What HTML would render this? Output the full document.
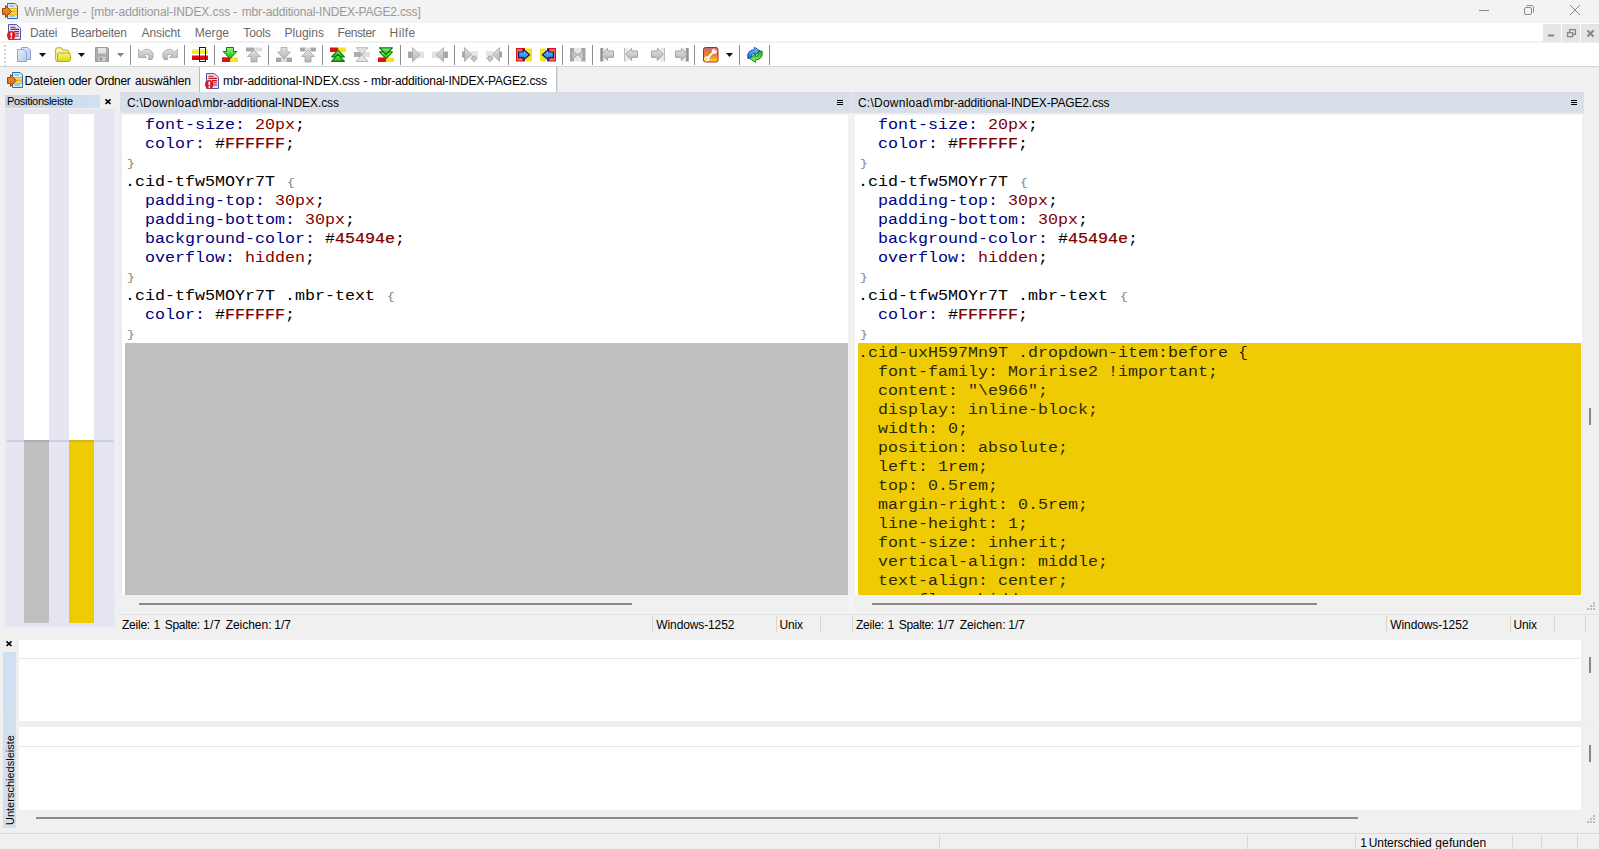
<!DOCTYPE html>
<html><head><meta charset="utf-8"><title>WinMerge</title><style>
*{box-sizing:border-box;margin:0;padding:0}
html,body{width:1599px;height:849px;overflow:hidden;background:#f0f0f0}
body{position:relative;font-family:"Liberation Sans",sans-serif;font-size:12px;color:#000}
.a{position:absolute}
.t{position:absolute;white-space:pre;line-height:14px;height:14px}
.code{position:absolute;white-space:pre;font-family:"Liberation Mono",monospace;font-size:14px;line-height:19px;height:19px;color:#000;transform:scaleX(1.1905);transform-origin:0 0}
.k{color:#000080}.v{color:#800000}.h{color:#800000;-webkit-text-stroke:0.25px #800000}.y{color:rgba(0,0,0,.84)}.b{color:#85857c;font-size:11.5px;margin-left:1.5px}
.sep{position:absolute;width:1px;background:#8d8d8d;top:45px;height:20px}
.ss{position:absolute;width:1px;background:#d7d7d7}
svg{position:absolute;overflow:visible}
</style></head><body>
<div class="a" style="left:0px;top:0px;width:1599px;height:23px;background:#f3f3f3;"></div>
<div class="a" style="left:0px;top:23px;width:1599px;height:20px;background:#fff;"></div>
<div class="a" style="left:0px;top:41px;width:1599px;height:2px;background:#f1f1f1;"></div>
<div class="a" style="left:0px;top:43px;width:1599px;height:23px;background:#fff;"></div>
<div class="a" style="left:0px;top:66px;width:1599px;height:1px;background:#d4d4d4;"></div>
<div class="a" style="left:0px;top:67px;width:1599px;height:25px;background:#f0f0f0;"></div>
<div class="a" style="left:199px;top:67px;width:1px;height:25px;background:#b9b9b9;"></div>
<div class="a" style="left:200px;top:67px;width:356px;height:25px;background:#fff;"></div>
<div class="a" style="left:556px;top:67px;width:1px;height:25px;background:#c4c4c4;"></div>
<div class="a" style="left:557px;top:67px;width:1px;height:25px;background:#dedede;"></div>
<div class="t" style="left:24.25px;top:5px;font-size:12px;color:#999999;letter-spacing:0.056px">WinMerge</div>
<div class="t" style="left:82.57px;top:5px;font-size:12px;color:#999999;letter-spacing:0px">-</div>
<div class="t" style="left:91.05px;top:5px;font-size:12px;color:#999999;letter-spacing:-0.089px">[mbr-additional-INDEX.css</div>
<div class="t" style="left:232.97px;top:5px;font-size:12px;color:#999999;letter-spacing:0px">-</div>
<div class="t" style="left:241.81px;top:5px;font-size:12px;color:#999999;letter-spacing:-0.185px">mbr-additional-INDEX-PAGE2.css]</div>
<svg style="left:1474px;top:0" width="120" height="23" viewBox="0 0 120 23"><g fill="none" stroke="#8b8b8b" stroke-width="1"><path d="M5 10.5H15"/><rect x="50.5" y="7.5" width="7" height="7" rx="1.5"/><path d="M52.5 5.5H57.5A2 2 0 0 1 59.5 7.5V12.5"/><path d="M96 5L106 15M106 5L96 15"/></g></svg>
<div class="a" style="left:1543px;top:24px;width:18px;height:18px;background:#e5e5e5;"></div>
<div class="a" style="left:1562px;top:24px;width:18px;height:18px;background:#e5e5e5;"></div>
<div class="a" style="left:1581px;top:24px;width:18px;height:18px;background:#e5e5e5;"></div>
<svg style="left:1543px;top:24px" width="56" height="18" viewBox="0 0 56 18"><rect x="5" y="10.5" width="6" height="2" fill="#7f868f"/><g fill="none" stroke="#7f868f" stroke-width="1.3"><rect x="24.6" y="8.6" width="5" height="4"/><path d="M26.6 8V5.6H32.4V10.4H30"/></g><path d="M44.5 6.5L50.5 12.5M50.5 6.5L44.5 12.5" stroke="#7f868f" stroke-width="2" fill="none"/></svg>
<div class="t" style="left:30.12px;top:26px;font-size:12px;color:#6a6a6a;letter-spacing:-0.205px">Datei</div>
<div class="t" style="left:70.82px;top:26px;font-size:12px;color:#6a6a6a;letter-spacing:-0.21px">Bearbeiten</div>
<div class="t" style="left:141.58px;top:26px;font-size:12px;color:#6a6a6a;letter-spacing:-0.09px">Ansicht</div>
<div class="t" style="left:194.82px;top:26px;font-size:12px;color:#6a6a6a;letter-spacing:0.051px">Merge</div>
<div class="t" style="left:243.34px;top:26px;font-size:12px;color:#6a6a6a;letter-spacing:-0.153px">Tools</div>
<div class="t" style="left:284.62px;top:26px;font-size:12px;color:#6a6a6a;letter-spacing:-0.007px">Plugins</div>
<div class="t" style="left:337.52px;top:26px;font-size:12px;color:#6a6a6a;letter-spacing:-0.417px">Fenster</div>
<div class="t" style="left:389.62px;top:26px;font-size:12px;color:#6a6a6a;letter-spacing:0.403px">Hilfe</div>
<div class="sep" style="left:130px"></div>
<div class="sep" style="left:184px"></div>
<div class="sep" style="left:214px"></div>
<div class="sep" style="left:268px"></div>
<div class="sep" style="left:322px"></div>
<div class="sep" style="left:400px"></div>
<div class="sep" style="left:454px"></div>
<div class="sep" style="left:508px"></div>
<div class="sep" style="left:562px"></div>
<div class="sep" style="left:592px"></div>
<div class="sep" style="left:694px"></div>
<div class="sep" style="left:739px"></div>
<div class="sep" style="left:769px"></div>
<div class="a" style="left:4px;top:45px;width:1.5px;height:2px;background:#d2d2d2;"></div>
<div class="a" style="left:4px;top:49px;width:1.5px;height:2px;background:#d2d2d2;"></div>
<div class="a" style="left:4px;top:53px;width:1.5px;height:2px;background:#d2d2d2;"></div>
<div class="a" style="left:4px;top:57px;width:1.5px;height:2px;background:#d2d2d2;"></div>
<div class="a" style="left:4px;top:61px;width:1.5px;height:2px;background:#d2d2d2;"></div>
<div class="a" style="left:4px;top:65px;width:1.5px;height:2px;background:#d2d2d2;"></div>
<div class="t" style="left:24.62px;top:74px;font-size:12px;color:#000;letter-spacing:-0.135px">Dateien</div>
<div class="t" style="left:68.25px;top:74px;font-size:12px;color:#000;letter-spacing:-0.272px">oder</div>
<div class="t" style="left:95.04px;top:74px;font-size:12px;color:#000;letter-spacing:-0.318px">Ordner</div>
<div class="t" style="left:135.1px;top:74px;font-size:12px;color:#000;letter-spacing:-0.181px">auswählen</div>
<div class="t" style="left:222.96px;top:74px;font-size:12px;color:#000;letter-spacing:-0.051px">mbr-additional-INDEX.css</div>
<div class="t" style="left:363.57px;top:74px;font-size:12px;color:#000;letter-spacing:0px">-</div>
<div class="t" style="left:371.11px;top:74px;font-size:12px;color:#000;letter-spacing:-0.181px">mbr-additional-INDEX-PAGE2.css</div>
<svg width="0" height="0" style="left:0;top:0"><defs><linearGradient id="gG" x1="0" y1="0" x2="0" y2="1"><stop offset="0" stop-color="#a4f590"/><stop offset="0.5" stop-color="#4fd63c"/><stop offset="1" stop-color="#1fae14"/></linearGradient><linearGradient id="gS" x1="0" y1="0" x2="0" y2="1"><stop offset="0" stop-color="#e2e2e2"/><stop offset="1" stop-color="#b4b4b4"/></linearGradient><linearGradient id="gB" x1="0" y1="0" x2="0" y2="1"><stop offset="0" stop-color="#7fd0ff"/><stop offset="1" stop-color="#1560d8"/></linearGradient><linearGradient id="gW" x1="0" y1="0" x2="0" y2="1"><stop offset="0" stop-color="#cf6a6a"/><stop offset="0.55" stop-color="#f08030"/><stop offset="1" stop-color="#ffe020"/></linearGradient><linearGradient id="gY" x1="0" y1="0" x2="0" y2="1"><stop offset="0" stop-color="#f6f08a"/><stop offset="1" stop-color="#e4d800"/></linearGradient><linearGradient id="gP" x1="0" y1="0" x2="1" y2="1"><stop offset="0" stop-color="#e4eefc"/><stop offset="1" stop-color="#b4cbee"/></linearGradient><linearGradient id="gO" x1="0" y1="0" x2="0" y2="1"><stop offset="0" stop-color="#e8923a"/><stop offset="1" stop-color="#d86a10"/></linearGradient></defs></svg>
<svg style="left:16px;top:47px" width="16" height="16" viewBox="0 0 16 16"><path d="M5.5 0.5H12L14.5 3V12.5H5.5Z" fill="url(#gP)" stroke="#8ea6cf"/><path d="M1.5 2.5H8L10.5 5V14.5H1.5Z" fill="url(#gP)" stroke="#8ea6cf"/></svg>
<svg style="left:39px;top:53px" width="7" height="4" viewBox="0 0 7 4"><path d="M0 0H7L3.5 4Z" fill="#111"/></svg>
<svg style="left:55px;top:47px" width="16" height="16" viewBox="0 0 16 16"><path d="M0.6 3Q0.6 0.7 2.8 0.7H5.6Q6.8 0.7 7.4 2L8 3H12Q13.6 3 13.6 4.6V13Q13.6 14.5 12 14.5H2.6Q0.6 14.5 0.6 12.5Z" fill="#f6f2a4" stroke="#b9ad12"/><path d="M2.5 7.2Q2.5 6 3.9 6H14Q15.4 6 15.4 7.4V12.6Q15.4 14.5 13.4 14.5H4Q2.5 14.5 2.5 13Z" fill="url(#gY)" stroke="#b9ad12"/></svg>
<svg style="left:78px;top:53px" width="7" height="4" viewBox="0 0 7 4"><path d="M0 0H7L3.5 4Z" fill="#111"/></svg>
<svg style="left:95px;top:47px" width="16" height="16" viewBox="0 0 16 16"><path d="M0.5 0.5H12.5L13.5 1.5V14.5H0.5Z" fill="#ababab" stroke="#9a9a9a"/><rect x="3" y="1" width="8" height="5.5" fill="#e4e4e4"/><rect x="3.5" y="9.5" width="7" height="5" fill="#c9c9c9"/><rect x="5" y="10.5" width="2" height="3" fill="#8c8c8c"/></svg>
<svg style="left:117px;top:53px" width="7" height="4" viewBox="0 0 7 4"><path d="M0 0H7L3.5 4Z" fill="#858585"/></svg>
<svg style="left:138px;top:48px" width="16" height="16" viewBox="0 0 16 16"><path d="M0.5 1.4V9.6H8.7L5.9 7Q8 5.4 10 6.8Q11.8 8.4 10.2 11.5H14Q17 7 13.4 3Q8.5 -1 3.2 4Z" fill="url(#gS)" stroke="#a4a4a4" stroke-width="0.8"/></svg>
<svg style="left:162px;top:48px" width="16" height="16" viewBox="0 0 16 16"><g transform="translate(16,0) scale(-1,1)"><path d="M0.5 1.4V9.6H8.7L5.9 7Q8 5.4 10 6.8Q11.8 8.4 10.2 11.5H14Q17 7 13.4 3Q8.5 -1 3.2 4Z" fill="url(#gS)" stroke="#a4a4a4" stroke-width="0.8"/></g></svg>
<svg style="left:192px;top:47px" width="16" height="16" viewBox="0 0 16 16"><rect x="0" y="2.5" width="16" height="4.2" fill="#f4e41c"/><rect x="0" y="2.5" width="16" height="1.2" fill="#f7f08c"/><rect x="0" y="8.5" width="16" height="4.2" fill="#e01010"/><rect x="0" y="11.5" width="16" height="1.2" fill="#b00000"/><rect x="7.5" y="0.5" width="6" height="14" fill="none" stroke="#1c1c1c" stroke-width="1"/></svg>
<svg style="left:222px;top:47px" width="16" height="16" viewBox="0 0 16 16"><rect x="0" y="10.3" width="8" height="4.7" fill="#e01010"/><rect x="8" y="10.3" width="8" height="4.7" fill="#f4e41c"/><path d="M4.5 0.5H11.5V4.5H14.8L8 11.8L1.2 4.5H4.5Z" fill="url(#gG)" stroke="#0c7a08" stroke-width="1"/></svg>
<svg style="left:246px;top:47px" width="16" height="16" viewBox="0 0 16 16"><rect x="0" y="0.5" width="8" height="4" fill="#a8a8a8"/><rect x="8" y="0.5" width="8" height="4" fill="#dedede"/><path d="M5 15V9.5H1.5L8 3L14.5 9.5H11V15Z" fill="url(#gS)" stroke="#a3a3a3" stroke-width="0.8"/></svg>
<svg style="left:276px;top:47px" width="16" height="16" viewBox="0 0 16 16"><rect x="0" y="10.5" width="5.5" height="4.5" fill="#a8a8a8"/><rect x="5.5" y="10.5" width="5" height="4.5" fill="#dcdcdc"/><rect x="10.5" y="10.5" width="5.5" height="4.5" fill="#a8a8a8"/><path d="M5 0.5H11V5H14.5L8 12L1.5 5H5Z" fill="url(#gS)" stroke="#a3a3a3" stroke-width="0.8"/></svg>
<svg style="left:300px;top:47px" width="16" height="16" viewBox="0 0 16 16"><rect x="0" y="0.5" width="5.5" height="4" fill="#a8a8a8"/><rect x="5.5" y="0.5" width="5" height="4" fill="#dcdcdc"/><rect x="10.5" y="0.5" width="5.5" height="4" fill="#a8a8a8"/><path d="M5 15V9.5H1.5L8 3L14.5 9.5H11V15Z" fill="url(#gS)" stroke="#a3a3a3" stroke-width="0.8"/></svg>
<svg style="left:330px;top:47px" width="16" height="16" viewBox="0 0 16 16"><rect x="0" y="0.5" width="8" height="4.5" fill="#e01010"/><rect x="8" y="0.5" width="8" height="4.5" fill="#f4e41c"/><path d="M8 3.2L14.4 9.8H1.6Z" fill="url(#gG)" stroke="#0c7a08" stroke-width="1.2" stroke-linejoin="round"/><path d="M8 7.4L14.4 14.3H1.6Z" fill="url(#gG)" stroke="#0c7a08" stroke-width="1.2" stroke-linejoin="round"/></svg>
<svg style="left:354px;top:47px" width="16" height="16" viewBox="0 0 16 16"><rect x="0" y="5" width="8" height="5" fill="#acacac"/><rect x="8" y="5" width="8" height="5" fill="#dedede"/><path d="M2 0.7H14L8 7.5Z M2 14.5H14L8 7.5Z" fill="#e2e2e2" stroke="#b2b2b2" stroke-width="0.9"/></svg>
<svg style="left:378px;top:47px" width="16" height="16" viewBox="0 0 16 16"><rect x="0" y="10.5" width="8" height="4.5" fill="#e01010"/><rect x="8" y="10.5" width="8" height="4.5" fill="#f4e41c"/><path d="M1.6 4.8H14.4L8 11.6Z" fill="url(#gG)" stroke="#0c7a08" stroke-width="1.2" stroke-linejoin="round"/><path d="M1.6 0.8H14.4L8 7.5Z" fill="url(#gG)" stroke="#0c7a08" stroke-width="1.2" stroke-linejoin="round"/></svg>
<svg style="left:408px;top:47px" width="16" height="16" viewBox="0 0 16 16"><rect x="0" y="4.5" width="8" height="6.5" fill="#a8a8a8"/><rect x="8" y="4.5" width="8" height="6.5" fill="#e2e2e2"/><path d="M4.5 0.5L12 7.7L4.5 14.8Z" fill="url(#gS)" stroke="#a6a6a6" stroke-width="0.8"/></svg>
<svg style="left:432px;top:47px" width="16" height="16" viewBox="0 0 16 16"><g transform="translate(16,0) scale(-1,1)"><rect x="0" y="4.5" width="8" height="6.5" fill="#a8a8a8"/><rect x="8" y="4.5" width="8" height="6.5" fill="#e2e2e2"/><path d="M4.5 0.5L12 7.7L4.5 14.8Z" fill="url(#gS)" stroke="#a6a6a6" stroke-width="0.8"/></g></svg>
<svg style="left:462px;top:47px" width="16" height="16" viewBox="0 0 16 16"><rect x="0" y="4.5" width="3" height="6" fill="#a8a8a8"/><rect x="8" y="4" width="8" height="6" fill="#e6e6e6"/><path d="M2.5 0.5L9.5 7.5L2.5 14.5Z" fill="url(#gS)" stroke="#a6a6a6" stroke-width="0.8"/><path d="M10.5 9H13.5V11H15.5L12 14.8L8.5 11H10.5Z" fill="#c9c9c9" stroke="#a2a2a2" stroke-width="0.8"/></svg>
<svg style="left:486px;top:47px" width="16" height="16" viewBox="0 0 16 16"><g transform="translate(16,0) scale(-1,1)"><rect x="0" y="4.5" width="3" height="6" fill="#a8a8a8"/><rect x="8" y="4" width="8" height="6" fill="#e6e6e6"/><path d="M2.5 0.5L9.5 7.5L2.5 14.5Z" fill="url(#gS)" stroke="#a6a6a6" stroke-width="0.8"/><path d="M10.5 9H13.5V11H15.5L12 14.8L8.5 11H10.5Z" fill="#c9c9c9" stroke="#a2a2a2" stroke-width="0.8"/></g></svg>
<svg style="left:516px;top:47px" width="16" height="16" viewBox="0 0 16 16"><rect x="0.5" y="1.5" width="8" height="12.5" fill="#f06868" stroke="#e01010"/><rect x="10" y="1.5" width="6" height="13" fill="#f4e41c"/><path d="M2.6 5H7.2V2.2L13.6 7.8L7.2 13.4V10.6H2.6Z" fill="url(#gB)" stroke="#0a1e6e" stroke-width="1.2" stroke-linejoin="round"/></svg>
<svg style="left:540px;top:47px" width="16" height="16" viewBox="0 0 16 16"><g transform="translate(16,0) scale(-1,1)"><rect x="0.5" y="1.5" width="8" height="12.5" fill="#f06868" stroke="#e01010"/><rect x="10" y="1.5" width="6" height="13" fill="#f4e41c"/><path d="M2.6 5H7.2V2.2L13.6 7.8L7.2 13.4V10.6H2.6Z" fill="url(#gB)" stroke="#0a1e6e" stroke-width="1.2" stroke-linejoin="round"/></g></svg>
<svg style="left:570px;top:47px" width="16" height="16" viewBox="0 0 16 16"><rect x="0" y="1" width="4.2" height="13.5" fill="#a6a6a6"/><rect x="11.3" y="1" width="4.2" height="13.5" fill="#a6a6a6"/><rect x="5" y="1" width="5.5" height="13.5" fill="#e6e6e6"/><path d="M2 3L7.7 7.7L2 12.5Z M13.5 3L7.7 7.7L13.5 12.5Z" fill="#c4c4c4" stroke="#9e9e9e" stroke-width="0.8"/></svg>
<svg style="left:600px;top:47px" width="15" height="16" viewBox="0 0 15 16"><rect x="0.3" y="1" width="2.6" height="13.5" fill="#909090"/><rect x="3" y="1" width="2.5" height="13.5" fill="#e6e6e6"/><path d="M13.5 3.9H7.6V1.2L1.8 7.3L7.6 13.6V10.4H13.5Z" fill="url(#gS)" stroke="#9f9f9f" stroke-width="0.9"/></svg>
<svg style="left:624px;top:47px" width="15" height="16" viewBox="0 0 15 16"><rect x="0.3" y="1" width="1" height="13.5" fill="#a0a0a0"/><rect x="1.5" y="1" width="3" height="13.5" fill="#e8e8e8"/><path d="M13.5 3.9H7.6V1.2L1.8 7.3L7.6 13.6V10.4H13.5Z" fill="url(#gS)" stroke="#9f9f9f" stroke-width="0.9"/></svg>
<svg style="left:650px;top:47px" width="15" height="16" viewBox="0 0 15 16"><g transform="translate(15,0) scale(-1,1)"><rect x="0.3" y="1" width="1" height="13.5" fill="#a0a0a0"/><rect x="1.5" y="1" width="3" height="13.5" fill="#e8e8e8"/><path d="M13.5 3.9H7.6V1.2L1.8 7.3L7.6 13.6V10.4H13.5Z" fill="url(#gS)" stroke="#9f9f9f" stroke-width="0.9"/></g></svg>
<svg style="left:674px;top:47px" width="15" height="16" viewBox="0 0 15 16"><g transform="translate(15,0) scale(-1,1)"><rect x="0.3" y="1" width="2.6" height="13.5" fill="#909090"/><rect x="3" y="1" width="2.5" height="13.5" fill="#e6e6e6"/><path d="M13.5 3.9H7.6V1.2L1.8 7.3L7.6 13.6V10.4H13.5Z" fill="url(#gS)" stroke="#9f9f9f" stroke-width="0.9"/></g></svg>
<svg style="left:703px;top:47px" width="16" height="16" viewBox="0 0 16 16"><rect x="0.5" y="0.5" width="14.5" height="14.5" rx="2" fill="url(#gW)" stroke="#a52a2a"/><path d="M4 11.6L11 4.4" stroke="#fff" stroke-width="2" stroke-linecap="butt"/><circle cx="11.3" cy="4.2" r="2.5" fill="#fff"/><path d="M11.3 4.2L14.6 2.6L12.8 0.8Z" fill="#d5705c"/><circle cx="3.9" cy="11.7" r="2.5" fill="#fff"/><path d="M3.9 11.7L0.8 13.2L2.6 15Z" fill="#f8c838"/><circle cx="3.7" cy="11.9" r="0.8" fill="#f4a636"/></svg>
<svg style="left:726px;top:53px" width="7" height="4" viewBox="0 0 7 4"><path d="M0 0H7L3.5 4Z" fill="#111"/></svg>
<svg style="left:747px;top:47px" width="16" height="16" viewBox="0 0 16 16"><path d="M0.9 11.4Q-0.6 3.4 7.4 2.7V0.3L13.4 4.1L7.8 8.4V6.2Q3.9 6.3 4.9 11.4Z" fill="url(#gB)" stroke="#0b3fae" stroke-width="0.9" stroke-linejoin="round"/><g transform="rotate(180 8 7.8)"><path d="M0.9 11.4Q-0.6 3.4 7.4 2.7V0.3L13.4 4.1L7.8 8.4V6.2Q3.9 6.3 4.9 11.4Z" fill="url(#gG)" stroke="#0c7a08" stroke-width="0.9" stroke-linejoin="round"/></g></svg>
<svg style="left:2px;top:3px" width="16" height="16" viewBox="0 0 16 16"><path d="M5.5 0.5H13L15.5 3V15.5H5.5Z" fill="#d3ecfc" stroke="#2b6cb0"/><path d="M7.5 3H12M7.5 13H13" stroke="#5aa0d8" stroke-width="1"/><rect x="6" y="5" width="9" height="7" fill="#f3b90e"/><path d="M8 6.8H15M8 10.2H15" stroke="#fbe27a" stroke-width="1.2"/><path d="M0.5 5.5H3.5V2.5L9.3 8.5L3.5 14.5V11.5H0.5Z" fill="url(#gO)" stroke="#8a3c0a" stroke-width="0.9"/></svg>
<svg style="left:7px;top:72px" width="16" height="16" viewBox="0 0 16 16"><path d="M5.5 0.5H13L15.5 3V15.5H5.5Z" fill="#d3ecfc" stroke="#2b6cb0"/><path d="M7.5 3H12M7.5 13H13" stroke="#5aa0d8" stroke-width="1"/><rect x="6" y="5" width="9" height="7" fill="#f3b90e"/><path d="M8 6.8H15M8 10.2H15" stroke="#fbe27a" stroke-width="1.2"/><path d="M0.5 5.5H3.5V2.5L9.3 8.5L3.5 14.5V11.5H0.5Z" fill="url(#gO)" stroke="#8a3c0a" stroke-width="0.9"/></svg>
<svg style="left:6px;top:24px" width="16" height="16" viewBox="0 0 16 16"><path d="M2.5 0.5H10.5L14.5 4.2V15.5H2.5Z" fill="#e4dcfa" stroke="#4c58b4"/><path d="M4.5 3.2H9.5M4.5 5.4H13M8 7.6H13M9.5 9.8H13M10 12H13" stroke="#c01818" stroke-width="1.1"/><circle cx="5.3" cy="11.4" r="4.3" fill="#d81c1c"/><rect x="4.5" y="8.5" width="1.6" height="4" rx="0.7" fill="#fff"/><circle cx="5.3" cy="14" r="0.9" fill="#fff"/></svg>
<svg style="left:204px;top:73px" width="16" height="16" viewBox="0 0 16 16"><path d="M2.5 0.5H10.5L14.5 4.2V15.5H2.5Z" fill="#e4dcfa" stroke="#4c58b4"/><path d="M4.5 3.2H9.5M4.5 5.4H13M8 7.6H13M9.5 9.8H13M10 12H13" stroke="#c01818" stroke-width="1.1"/><circle cx="5.3" cy="11.4" r="4.3" fill="#d81c1c"/><rect x="4.5" y="8.5" width="1.6" height="4" rx="0.7" fill="#fff"/><circle cx="5.3" cy="14" r="0.9" fill="#fff"/></svg>
<div class="a" style="left:5px;top:95px;width:95px;height:13px;background:linear-gradient(90deg,#cbd5e1,#cfe1f4)"></div>
<div class="t pos" style="left:7px;top:94px;font-size:11px;color:#000;letter-spacing:-0.3px;">Positionsleiste</div>
<svg style="left:105px;top:98.7px" width="6" height="5.4" viewBox="0 0 6 5.4"><path d="M0.5 0.4L5.5 5M5.5 0.4L0.5 5" stroke="#000" stroke-width="1.6" fill="none"/></svg>
<div class="a" style="left:5px;top:109px;width:110px;height:518px;background:#e6e6f2;"></div>
<div class="a" style="left:24px;top:114px;width:25px;height:326px;background:#fff;"></div>
<div class="a" style="left:69px;top:114px;width:25px;height:326px;background:#fff;"></div>
<div class="a" style="left:24px;top:440px;width:25px;height:183px;background:#c0c0c0;"></div>
<div class="a" style="left:69px;top:440px;width:25px;height:183px;background:#efcb05;"></div>
<div class="a" style="left:7px;top:439.5px;width:106px;height:2px;background:rgba(90,90,150,0.17);"></div>
<div class="a" style="left:120px;top:92px;width:1464px;height:1px;background:#dde2e9;"></div>
<div class="a" style="left:120px;top:93px;width:1464px;height:20px;background:#d9dfe8;"></div>
<div class="a" style="left:120px;top:93px;width:1464px;height:1px;background:#d5dbe3;"></div>
<div class="a" style="left:851px;top:93px;width:1px;height:20px;background:#e3e8ef;"></div>
<div class="t" style="left:126.9px;top:96px;font-size:12px;color:#000;letter-spacing:0.251px">C:\Download\</div>
<div class="t" style="left:202.61px;top:96px;font-size:12px;color:#000;letter-spacing:-0.071px">mbr-additional-INDEX.css</div>
<div class="t" style="left:857.9px;top:96px;font-size:12px;color:#000;letter-spacing:0.251px">C:\Download\</div>
<div class="t" style="left:933.61px;top:96px;font-size:12px;color:#000;letter-spacing:-0.181px">mbr-additional-INDEX-PAGE2.css</div>
<div class="a" style="left:837px;top:100px;width:5.6px;height:1px;background:#000;"></div>
<div class="a" style="left:837px;top:102px;width:5.6px;height:1px;background:#000;"></div>
<div class="a" style="left:837px;top:104px;width:5.6px;height:1px;background:#000;"></div>
<div class="a" style="left:1571px;top:100px;width:5.6px;height:1px;background:#000;"></div>
<div class="a" style="left:1571px;top:102px;width:5.6px;height:1px;background:#000;"></div>
<div class="a" style="left:1571px;top:104px;width:5.6px;height:1px;background:#000;"></div>
<div class="a" style="left:118px;top:113px;width:4px;height:482px;background:#ececec;"></div>
<div class="a" style="left:122px;top:113px;width:726px;height:482px;background:#fff;"></div>
<div class="a" style="left:848px;top:113px;width:7px;height:482px;background:#f1f1f1;"></div>
<div class="a" style="left:855px;top:113px;width:727px;height:482px;background:#fff;"></div>
<div class="a" style="left:120px;top:113px;width:1464px;height:2px;background:#f0f0f0;"></div>
<div class="a" style="left:125px;top:343px;width:723px;height:252px;background:#c0c0c0;"></div>
<div class="a" style="left:858px;top:343px;width:723px;height:252px;background:#efcb05;"></div>
<div class="a" style="left:1581px;top:343px;width:1px;height:252px;background:#fbf6c8;"></div>
<div class="code" style="left:124.6px;top:116px">  <span class="k">font-size:</span> <span class="v">20px</span>;</div>
<div class="code" style="left:857.6px;top:116px">  <span class="k">font-size:</span> <span class="v">20px</span>;</div>
<div class="code" style="left:124.6px;top:135px">  <span class="k">color:</span> #<span class="h">FFFFFF</span>;</div>
<div class="code" style="left:857.6px;top:135px">  <span class="k">color:</span> #<span class="h">FFFFFF</span>;</div>
<div class="code" style="left:124.6px;top:154px"><span class="b">}</span></div>
<div class="code" style="left:857.6px;top:154px"><span class="b">}</span></div>
<div class="code" style="left:124.6px;top:173px">.cid-tfw5MOYr7T <span class="b">{</span></div>
<div class="code" style="left:857.6px;top:173px">.cid-tfw5MOYr7T <span class="b">{</span></div>
<div class="code" style="left:124.6px;top:192px">  <span class="k">padding-top:</span> <span class="v">30px</span>;</div>
<div class="code" style="left:857.6px;top:192px">  <span class="k">padding-top:</span> <span class="v">30px</span>;</div>
<div class="code" style="left:124.6px;top:211px">  <span class="k">padding-bottom:</span> <span class="v">30px</span>;</div>
<div class="code" style="left:857.6px;top:211px">  <span class="k">padding-bottom:</span> <span class="v">30px</span>;</div>
<div class="code" style="left:124.6px;top:230px">  <span class="k">background-color:</span> #<span class="h">45494e</span>;</div>
<div class="code" style="left:857.6px;top:230px">  <span class="k">background-color:</span> #<span class="h">45494e</span>;</div>
<div class="code" style="left:124.6px;top:249px">  <span class="k">overflow:</span> <span class="v">hidden</span>;</div>
<div class="code" style="left:857.6px;top:249px">  <span class="k">overflow:</span> <span class="v">hidden</span>;</div>
<div class="code" style="left:124.6px;top:268px"><span class="b">}</span></div>
<div class="code" style="left:857.6px;top:268px"><span class="b">}</span></div>
<div class="code" style="left:124.6px;top:287px">.cid-tfw5MOYr7T .mbr-text <span class="b">{</span></div>
<div class="code" style="left:857.6px;top:287px">.cid-tfw5MOYr7T .mbr-text <span class="b">{</span></div>
<div class="code" style="left:124.6px;top:306px">  <span class="k">color:</span> #<span class="h">FFFFFF</span>;</div>
<div class="code" style="left:857.6px;top:306px">  <span class="k">color:</span> #<span class="h">FFFFFF</span>;</div>
<div class="code" style="left:124.6px;top:325px"><span class="b">}</span></div>
<div class="code" style="left:857.6px;top:325px"><span class="b">}</span></div>
<div class="code" style="left:857.6px;top:344px"><span class="y">.cid-uxH597Mn9T .dropdown-item:before {</span></div>
<div class="code" style="left:857.6px;top:363px"><span class="y">  font-family: Moririse2 !important;</span></div>
<div class="code" style="left:857.6px;top:382px"><span class="y">  content: &quot;\e966&quot;;</span></div>
<div class="code" style="left:857.6px;top:401px"><span class="y">  display: inline-block;</span></div>
<div class="code" style="left:857.6px;top:420px"><span class="y">  width: 0;</span></div>
<div class="code" style="left:857.6px;top:439px"><span class="y">  position: absolute;</span></div>
<div class="code" style="left:857.6px;top:458px"><span class="y">  left: 1rem;</span></div>
<div class="code" style="left:857.6px;top:477px"><span class="y">  top: 0.5rem;</span></div>
<div class="code" style="left:857.6px;top:496px"><span class="y">  margin-right: 0.5rem;</span></div>
<div class="code" style="left:857.6px;top:515px"><span class="y">  line-height: 1;</span></div>
<div class="code" style="left:857.6px;top:534px"><span class="y">  font-size: inherit;</span></div>
<div class="code" style="left:857.6px;top:553px"><span class="y">  vertical-align: middle;</span></div>
<div class="code" style="left:857.6px;top:572px"><span class="y">  text-align: center;</span></div>
<div class="code" style="left:857.6px;top:591px"><span class="y">  overflow: hidden;</span></div>
<div class="a" style="left:118px;top:595px;width:1481px;height:19px;background:#f0f0f0;"></div>
<div class="a" style="left:848px;top:595px;width:7px;height:19px;background:#f4f4f4;"></div>
<div class="a" style="left:1582px;top:113px;width:17px;height:482px;background:#f0f0f0;"></div>
<div class="a" style="left:1589px;top:408px;width:2px;height:17px;background:#868686;"></div>
<div class="a" style="left:139px;top:603px;width:493px;height:2px;background:#8a8a8a;"></div>
<div class="a" style="left:872px;top:603px;width:445px;height:2px;background:#8a8a8a;"></div>
<div class="a" style="left:1593px;top:602px;width:2px;height:2px;background:#bcbcbc;"></div>
<div class="a" style="left:1593px;top:605px;width:2px;height:2px;background:#bcbcbc;"></div>
<div class="a" style="left:1590px;top:605px;width:2px;height:2px;background:#bcbcbc;"></div>
<div class="a" style="left:1593px;top:608px;width:2px;height:2px;background:#bcbcbc;"></div>
<div class="a" style="left:1590px;top:608px;width:2px;height:2px;background:#bcbcbc;"></div>
<div class="a" style="left:1587px;top:608px;width:2px;height:2px;background:#bcbcbc;"></div>
<div class="a" style="left:118px;top:614px;width:1481px;height:1px;background:#e2e2e2;"></div>
<div class="ss" style="left:652px;top:616px;height:16px"></div>
<div class="ss" style="left:776px;top:616px;height:16px"></div>
<div class="ss" style="left:820px;top:616px;height:16px"></div>
<div class="ss" style="left:852px;top:616px;height:16px"></div>
<div class="ss" style="left:1386px;top:616px;height:16px"></div>
<div class="ss" style="left:1510px;top:616px;height:16px"></div>
<div class="ss" style="left:1554px;top:616px;height:16px"></div>
<div class="ss" style="left:1585px;top:616px;height:16px"></div>
<div class="t" style="left:121.88px;top:618px;font-size:12px;color:#000;letter-spacing:-0.208px">Zeile:</div>
<div class="t" style="left:153.49px;top:618px;font-size:12px;color:#000;letter-spacing:0px">1</div>
<div class="t" style="left:164.86px;top:618px;font-size:12px;color:#000;letter-spacing:-0.354px">Spalte:</div>
<div class="t" style="left:202.99px;top:618px;font-size:12px;color:#000;letter-spacing:0.341px">1/7</div>
<div class="t" style="left:225.63px;top:618px;font-size:12px;color:#000;letter-spacing:-0.024px">Zeichen:</div>
<div class="t" style="left:274.19px;top:618px;font-size:12px;color:#000;letter-spacing:0.066px">1/7</div>
<div class="t" style="left:656.35px;top:618px;font-size:12px;color:#000;letter-spacing:-0.12px">Windows-1252</div>
<div class="t" style="left:779.58px;top:618px;font-size:12px;color:#000;letter-spacing:-0.156px">Unix</div>
<div class="t" style="left:855.88px;top:618px;font-size:12px;color:#000;letter-spacing:-0.208px">Zeile:</div>
<div class="t" style="left:887.49px;top:618px;font-size:12px;color:#000;letter-spacing:0px">1</div>
<div class="t" style="left:898.86px;top:618px;font-size:12px;color:#000;letter-spacing:-0.354px">Spalte:</div>
<div class="t" style="left:936.99px;top:618px;font-size:12px;color:#000;letter-spacing:0.341px">1/7</div>
<div class="t" style="left:959.63px;top:618px;font-size:12px;color:#000;letter-spacing:-0.024px">Zeichen:</div>
<div class="t" style="left:1008.19px;top:618px;font-size:12px;color:#000;letter-spacing:0.066px">1/7</div>
<div class="t" style="left:1390.35px;top:618px;font-size:12px;color:#000;letter-spacing:-0.12px">Windows-1252</div>
<div class="t" style="left:1513.58px;top:618px;font-size:12px;color:#000;letter-spacing:-0.156px">Unix</div>
<svg style="left:6px;top:640.8px" width="6" height="5.4" viewBox="0 0 6 5.4"><path d="M0.5 0.4L5.5 5M5.5 0.4L0.5 5" stroke="#000" stroke-width="1.6" fill="none"/></svg>
<div class="a" style="left:3px;top:652px;width:13px;height:176px;background:linear-gradient(0deg,#d5dfeb,#cfe0f2)"></div>
<div class="t vt" style="left:3px;top:825.3px;font-size:11px;transform-origin:0 0;transform:rotate(-90deg);">Unterschiedsleiste</div>
<div class="a" style="left:19px;top:640px;width:1562px;height:81px;background:#fff;"></div>
<div class="a" style="left:19px;top:658px;width:1561px;height:1px;background:#e6e6e6;"></div>
<div class="a" style="left:19px;top:721px;width:1580px;height:6px;background:#efefef;"></div>
<div class="a" style="left:19px;top:727px;width:1562px;height:83px;background:#fff;"></div>
<div class="a" style="left:19px;top:746px;width:1561px;height:1px;background:#e6e6e6;"></div>
<div class="a" style="left:1589px;top:657px;width:2px;height:16px;background:#868686;"></div>
<div class="a" style="left:1589px;top:745px;width:2px;height:17px;background:#868686;"></div>
<div class="a" style="left:36px;top:817px;width:1322px;height:2px;background:#8a8a8a;"></div>
<div class="a" style="left:1593px;top:815px;width:2px;height:2px;background:#bcbcbc;"></div>
<div class="a" style="left:1593px;top:818px;width:2px;height:2px;background:#bcbcbc;"></div>
<div class="a" style="left:1590px;top:818px;width:2px;height:2px;background:#bcbcbc;"></div>
<div class="a" style="left:1593px;top:821px;width:2px;height:2px;background:#bcbcbc;"></div>
<div class="a" style="left:1590px;top:821px;width:2px;height:2px;background:#bcbcbc;"></div>
<div class="a" style="left:1587px;top:821px;width:2px;height:2px;background:#bcbcbc;"></div>
<div class="a" style="left:0px;top:833px;width:1599px;height:1px;background:#d9d9d9;"></div>
<div class="ss" style="left:939px;top:835px;height:14px"></div>
<div class="ss" style="left:1247px;top:835px;height:14px"></div>
<div class="ss" style="left:1355px;top:835px;height:14px"></div>
<div class="ss" style="left:1512px;top:835px;height:14px"></div>
<div class="ss" style="left:1541px;top:835px;height:14px"></div>
<div class="ss" style="left:1577px;top:835px;height:14px"></div>
<div class="t" style="left:1360.29px;top:836px;font-size:12px;color:#000;letter-spacing:0px">1</div>
<div class="t" style="left:1368.78px;top:836px;font-size:12px;color:#000;letter-spacing:-0.114px">Unterschied</div>
<div class="t" style="left:1435.3px;top:836px;font-size:12px;color:#000;letter-spacing:0.117px">gefunden</div>
</body></html>
